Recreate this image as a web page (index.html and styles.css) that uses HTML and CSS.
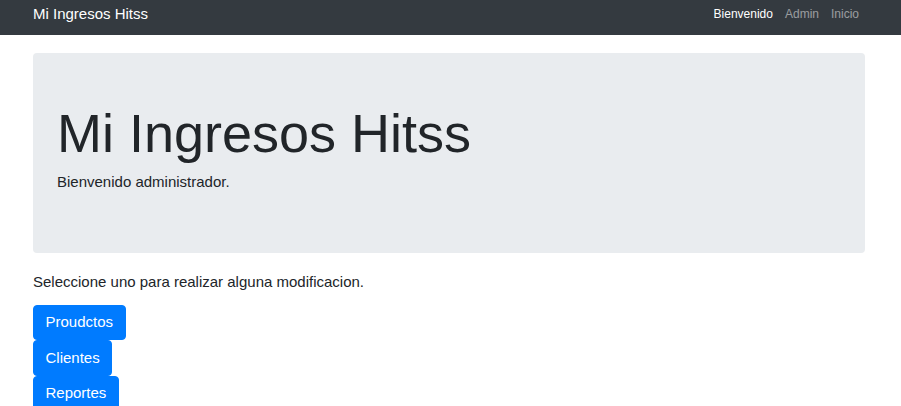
FILE: index.html
```html
<!DOCTYPE html>
<html lang="es">
<head>
<meta charset="utf-8">
<title>Mi Ingresos Hitss</title>
<link rel="stylesheet" href="styles.css">
</head>
<body>
<nav class="navbar">
  <a class="brand" href="#">Mi Ingresos Hitss</a>
  <ul class="nav">
    <li><a class="nav-link active" href="#">Bienvenido</a></li>
    <li><a class="nav-link" href="#">Admin</a></li>
    <li><a class="nav-link" href="#">Inicio</a></li>
  </ul>
</nav>
<main class="container">
  <section class="jumbotron">
    <h1 class="display">Mi Ingresos Hitss</h1>
    <p class="lead">Bienvenido administrador.</p>
  </section>
  <p class="intro">Seleccione uno para realizar alguna modificacion.</p>
  <div class="actions">
    <a class="btn" href="#">Proudctos</a>
    <a class="btn" href="#">Clientes</a>
    <a class="btn" href="#">Reportes</a>
  </div>
</main>
</body>
</html>
```
FILE: styles.css
```css
html, body {
  margin: 0;
  padding: 0;
  overflow: hidden;
}
body {
  font-family: "Liberation Sans", Arial, sans-serif;
  font-size: 15px;
  line-height: 1.5;
  color: #212529;
  background: #fff;
}
a { text-decoration: none; }

.navbar {
  height: 35px;
  box-sizing: border-box;
  background: #343a40;
  display: flex;
  justify-content: space-between;
  align-items: flex-start;
  padding: 0 36px 0 33px;
}
.brand {
  color: #fff;
  font-size: 15px;
  line-height: 22.5px;
  padding-top: 3px;
}
.nav {
  list-style: none;
  margin: 0;
  padding: 0;
  display: flex;
}
.nav-link {
  display: block;
  font-size: 12px;
  line-height: 18px;
  padding: 5px 6px 0;
  color: rgba(255, 255, 255, 0.5);
}
.nav-link.active { color: #fff; }

.container {
  padding: 18px 36px 0 33px;
}
.jumbotron {
  background: #e9ecef;
  border-radius: 4px;
  padding: 48px 24px;
  margin-bottom: 18px;
}
.display {
  margin: 0 0 5px;
  font-size: 54px;
  font-weight: 300;
  line-height: 1.2;
}
.lead {
  margin: 0 0 12px;
  font-size: 15px;
  line-height: 22.5px;
}
.intro {
  margin: 0 0 11px;
  line-height: 22.5px;
}
.actions {
  display: flex;
  flex-direction: column;
  align-items: flex-start;
}
.btn {
  display: block;
  color: #fff;
  background: #007bff;
  border: 1px solid #007bff;
  border-radius: 4px;
  padding: 5.5px 11.5px;
  font-size: 15px;
  line-height: 22.5px;
}
```
